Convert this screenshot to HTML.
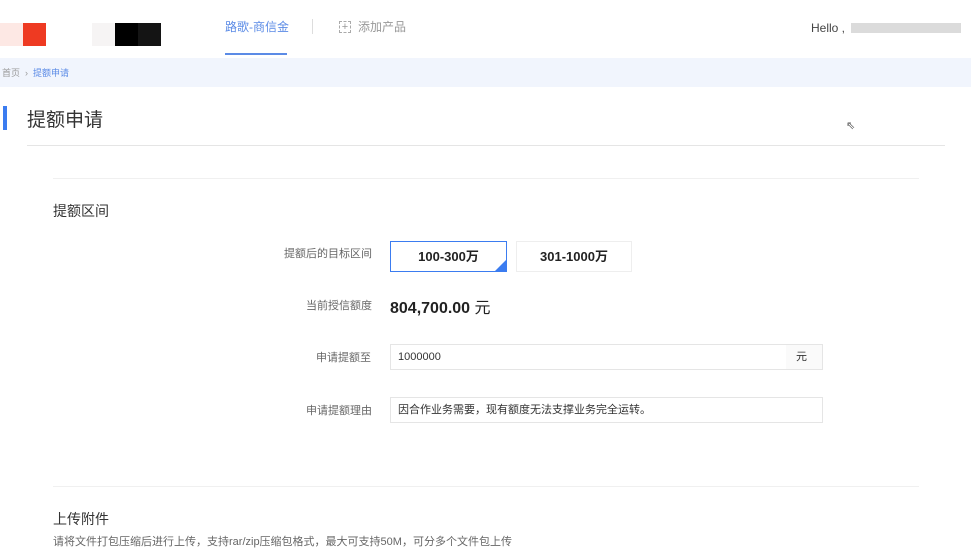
<!DOCTYPE html>
<html><head><meta charset="utf-8"><style>
*{margin:0;padding:0;box-sizing:border-box}
body{width:971px;height:557px;overflow:hidden;background:#fff;font-family:"Liberation Sans","Noto Sans CJK SC",sans-serif;position:relative;color:#333}
.a{position:absolute}
</style></head><body>
<div class="a" style="left:0;top:23px;width:23px;height:23px;background:#fde8e4"></div>
<div class="a" style="left:23px;top:23px;width:23px;height:23px;background:#ee3a22"></div>
<div class="a" style="left:92px;top:23px;width:23px;height:23px;background:#f6f4f4"></div>
<div class="a" style="left:115px;top:23px;width:23px;height:23px;background:#000"></div>
<div class="a" style="left:138px;top:23px;width:23px;height:23px;background:#141414"></div>
<div class="a" style="left:225px;top:18px;font-size:12px;color:#5b8be6">路歌-商信金</div>
<div class="a" style="left:225px;top:53px;width:62px;height:2px;background:#5b8be6"></div>
<div class="a" style="left:312px;top:19px;width:1px;height:15px;background:#ddd"></div>
<div class="a" style="left:339px;top:21px;width:12px;height:12px;border:1px dashed #aaa;font-size:11px;line-height:10px;text-align:center;color:#999">+</div>
<div class="a" style="left:358px;top:18px;font-size:12px;color:#999">添加产品</div>
<div class="a" style="left:811px;top:21px;font-size:12px;color:#444">Hello ,</div>
<div class="a" style="left:851px;top:23px;width:110px;height:10px;background:#ccc;opacity:.7"></div>
<div class="a" style="left:0;top:58px;width:971px;height:29px;background:#f1f5fd"></div>
<div class="a" style="left:2px;top:66px;font-size:9px;color:#999">首页 &nbsp;›&nbsp; <span style="color:#5b8be6">提额申请</span></div>
<div class="a" style="left:3px;top:106px;width:4px;height:24px;background:#3b7cf0"></div>
<div class="a" style="left:27px;top:105px;font-size:19px;color:#333">提额申请</div>
<div class="a" style="left:27px;top:145px;width:918px;height:1px;background:#e5e5e5"></div>
<div class="a" style="left:53px;top:178px;width:866px;height:1px;background:#f0f0f0"></div>
<div class="a" style="left:53px;top:201px;font-size:14px;color:#333">提额区间</div>
<div class="a" style="left:284px;top:245px;font-size:11px;color:#666">提额后的目标区间</div>
<div class="a" style="left:390px;top:241px;width:117px;height:31px;border:1px solid #3b7cf0;font-size:13px;font-weight:bold;text-align:center;line-height:29px;color:#222">100-300万</div>
<div class="a" style="left:495px;top:260px;width:0;height:0;border-left:11px solid transparent;border-bottom:11px solid #3b7cf0"></div>
<div class="a" style="left:516px;top:241px;width:116px;height:31px;border:1px solid #eee;font-size:13px;font-weight:bold;text-align:center;line-height:29px;color:#222">301-1000万</div>
<div class="a" style="left:306px;top:297px;font-size:11px;color:#666">当前授信额度</div>
<div class="a" style="left:390px;top:294px;font-size:16px;color:#222;font-weight:bold">804,700.00 <span style="font-weight:normal">元</span></div>
<div class="a" style="left:316px;top:349px;font-size:11px;color:#666">申请提额至</div>
<div class="a" style="left:390px;top:344px;width:433px;height:26px;border:1px solid #e5e5e5;font-size:11px;line-height:24px;padding-left:7px;color:#333">1000000</div>
<div class="a" style="left:786px;top:345px;width:36px;height:24px;background:#fafafa;font-size:11px;line-height:24px;padding-left:10px;color:#333">元</div>
<div class="a" style="left:306px;top:402px;font-size:11px;color:#666">申请提额理由</div>
<div class="a" style="left:390px;top:397px;width:433px;height:26px;border:1px solid #e5e5e5;font-size:11px;line-height:24px;padding-left:7px;color:#333">因合作业务需要，现有额度无法支撑业务完全运转。</div>
<div class="a" style="left:53px;top:486px;width:866px;height:1px;background:#f0f0f0"></div>
<div class="a" style="left:53px;top:509px;font-size:14px;color:#333">上传附件</div>
<div class="a" style="left:53px;top:533px;font-size:11px;color:#666">请将文件打包压缩后进行上传，支持rar/zip压缩包格式，最大可支持50M，可分多个文件包上传</div>
<div class="a" style="left:846px;top:119px;font-size:11px;color:#555">⇖</div>
</body></html>
